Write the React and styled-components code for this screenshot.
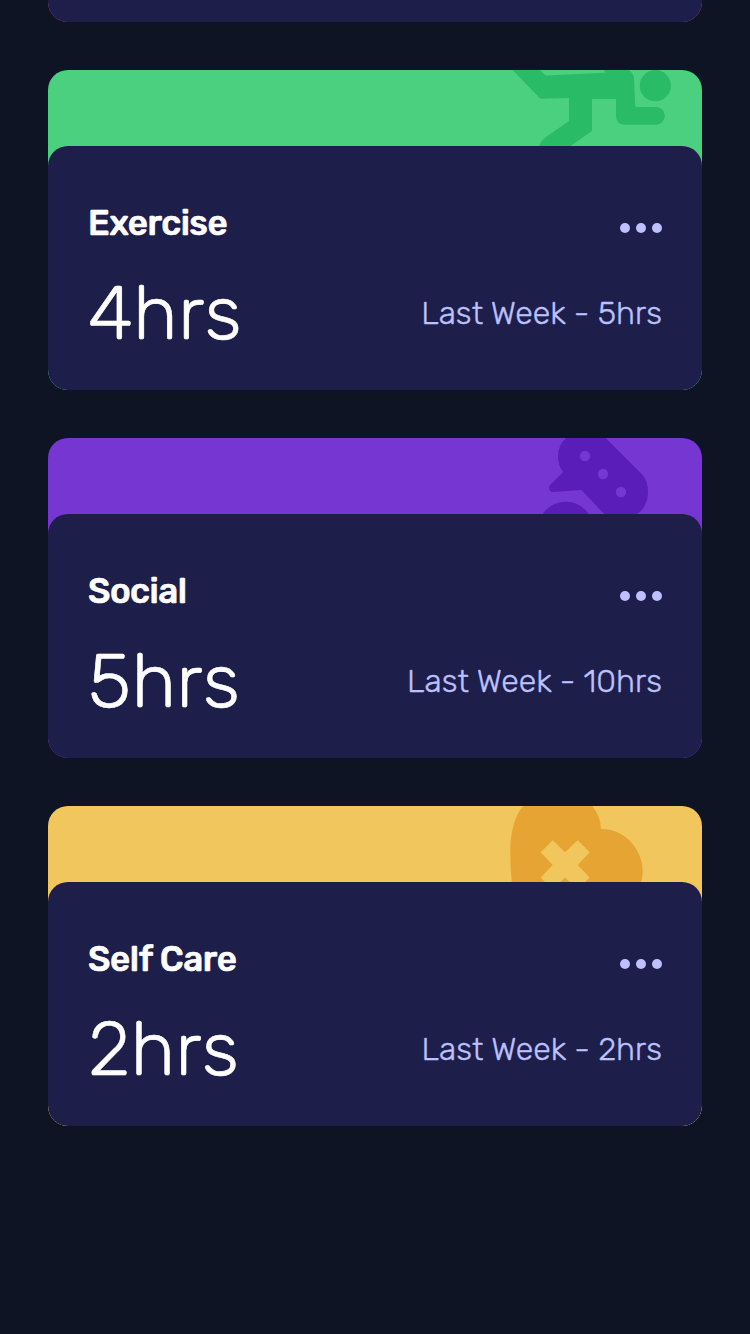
import React from "react";
import styled, { createGlobalStyle } from "styled-components";

const GlobalStyle = createGlobalStyle`
  * { box-sizing: border-box; }
  html { background: #0e1423; }
  body { margin: 0; background: #0e1423; overflow: hidden; }
`;

const Page = styled.main`
  height: 1334px;
  overflow: hidden;
  display: flex;
  flex-direction: column;
  justify-content: flex-start;
  gap: 48px;
  padding: 0 48px;
  background: #0e1423;
  font-family: Rubik, Roboto, "Liberation Sans", sans-serif;
`;

const Card = styled.article`
  flex: none;
  height: 320px;
  display: flex;
  flex-direction: column;
  border-radius: 20px;
  overflow: hidden;
  background: ${(p) => p.$color};
`;

const PreviousCard = styled(Card)`
  height: 22px;
  border-radius: 0 0 20px 20px;
`;

const Banner = styled.div`
  flex: none;
  height: 76px;
  display: flex;
  justify-content: flex-end;
  overflow: hidden;
`;

const Panel = styled.div`
  flex: 1;
  display: flex;
  flex-direction: column;
  padding: 53px 40px 0;
  border-radius: ${(p) => (p.$tail ? "0 0 20px 20px" : "20px")};
  background: #1d1e4a;
`;

const Row = styled.div`
  display: flex;
  align-items: center;
  justify-content: space-between;
  height: ${(p) => p.$height}px;
  white-space: nowrap;
`;

const Title = styled.h2`
  margin: 0;
  color: #fff;
  font-size: 35px;
  font-weight: 500;
  line-height: 48px;
  letter-spacing: ${(p) => p.$track}px;
  -webkit-text-stroke: 0.6px #fff;
`;

const Hours = styled.p`
  margin: 0;
  color: #fff;
  font-size: 75.5px;
  font-weight: 300;
  line-height: 98px;
  letter-spacing: 0.2px;
  -webkit-text-stroke: 0.6px #fff;
`;

const LastWeek = styled.p`
  margin: 0;
  color: #bdc1ff;
  font-size: 32px;
  font-weight: 300;
  line-height: 40px;
  letter-spacing: 0.03px;
  -webkit-text-stroke: 0.4px #bdc1ff;
`;

const MenuButton = styled.button`
  display: flex;
  gap: 6px;
  margin: 10px 0 0;
  padding: 0;
  border: 0;
  background: none;
`;

const Dot = styled.span`
  width: 10px;
  height: 10px;
  border-radius: 50%;
  background: #bdc1ff;
`;

const Art = styled.svg`
  display: block;
  flex: none;
`;

const ExerciseArt = () => (
  <Art width="200" height="76" viewBox="0 0 200 76" fill="#2abb66">
    <path d="M10.7 0L37.4 27.8Q38.3 28.8 39.6 28.7L67 28V51L44 67Q38.5 71 37.3 76H68.5L89.2 61.6Q90 61 90 60V29H114V46Q114.500 54.7 123 54.7H154A8.850 8.850 0 0 0 154 37H134.800Q133.200 37 133.200 35L132 8Q131.500 3 126.500 0H101.500Q102.500 .8 103 2.700L44.500 5.600Q43.500 5.600 43 5L38 0Z" />
    <circle cx="153.300" cy="15.700" r="15.600" />
  </Art>
);

const SocialArt = () => (
  <Art width="200" height="76" viewBox="0 0 200 76">
    <path fill="#5a1dba" d="M64 0Q56 7.500 56 18Q56 28 61.300 34L48.700 46.300C45.500 49.500 47.500 54.200 51.300 54L79.300 52L102.300 76H134.700C142 72 146 63 146 54Q146 42.500 139.700 36L103.700 0Z" />
    <circle fill="#5a1dba" cx="63.700" cy="91.400" r="27.700" />
    <g fill="#7536d2">
      <circle cx="83" cy="18" r="5.200" />
      <circle cx="101" cy="36" r="5.200" />
      <circle cx="119" cy="54" r="5.200" />
    </g>
  </Art>
);

const SelfCareArt = () => (
  <Art width="200" height="76" viewBox="0 0 200 76">
    <path fill="#e6a532" d="M21.300 0C12 10 8.300 28 8.300 45Q8.300 62 9.700 76H139.300A41.500 42.500 0 0 0 99 23Q98.500 10 90.300 0Z" />
    <path fill="#f1c65d" d="M50.700 34.300L63 46.300L75.700 34.300L87.700 46.300L75.700 59L87.700 71.500L83.300 76H67.500L63 71.300L58.500 76H43L38.700 71.500L50.700 59L38.700 46.300Z" />
  </Art>
);

const cards = [
  { title: "Exercise", hours: "4hrs", last: "Last Week - 5hrs", color: "#4bd080", Picture: ExerciseArt, track: -0.55 },
  { title: "Social", hours: "5hrs", last: "Last Week - 10hrs", color: "#7536d2", Picture: SocialArt, track: -0.55 },
  { title: "Self Care", hours: "2hrs", last: "Last Week - 2hrs", color: "#f1c65d", Picture: SelfCareArt, track: -0.4 },
];

function ActivityCard({ title, hours, last, color, Picture, track }) {
  return (
    <Card $color={color}>
      <Banner><Picture /></Banner>
      <Panel>
        <Row $height={48}>
          <Title $track={track}>{title}</Title>
          <MenuButton aria-label={`${title} options`}><Dot /><Dot /><Dot /></MenuButton>
        </Row>
        <Row $height={132}>
          <Hours>{hours}</Hours>
          <LastWeek>{last}</LastWeek>
        </Row>
      </Panel>
    </Card>
  );
}

export default function App() {
  return (
    <>
      <GlobalStyle />
      <Page>
        <PreviousCard $color="#ff5c7c"><Panel $tail /></PreviousCard>
        {cards.map((card) => <ActivityCard key={card.title} {...card} />)}
      </Page>
    </>
  );
}
